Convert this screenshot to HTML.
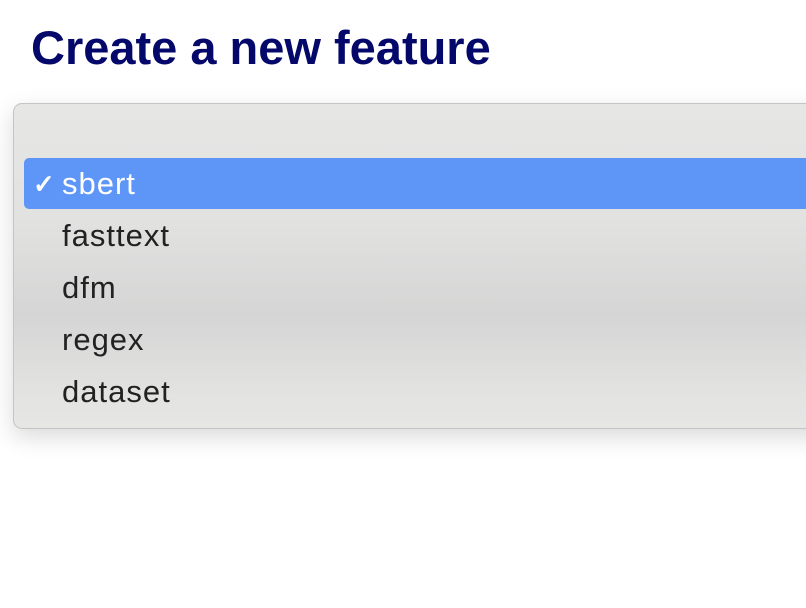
<!DOCTYPE html>
<html><head><style>
body{margin:0;width:806px;height:608px;background:#fff;overflow:hidden;position:relative;font-family:"Liberation Sans",sans-serif}
h1{position:absolute;left:31px;top:20px;margin:0;font-size:47px;font-weight:bold;color:#05086b;letter-spacing:0px}
.panel{position:absolute;left:13px;top:103px;width:820px;height:324px;border:1px solid #c4c4c4;border-radius:9px;
background:linear-gradient(#e6e6e5 0%,#e2e2e1 35%,#d5d5d5 65%,#e3e3e2 90%,#e6e6e5 100%);
box-shadow:0 8px 24px rgba(0,0,0,0.15)}
.hl{position:absolute;left:24px;top:158px;width:800px;height:51px;background:#5d96f6;border-radius:5px}
.it{position:absolute;left:62px;font-size:31px;letter-spacing:1px;color:#222;line-height:52px}
.ck{position:absolute;left:33px;top:158px;line-height:53px;font-size:26px;font-weight:bold;color:#fff}
</style></head><body>
<h1>Create a new feature</h1>
<div class="panel"></div>
<div class="hl"></div>
<div class="ck">✓</div>
<div class="it" style="top:158px;color:#fff">sbert</div>
<div class="it" style="top:210px">fasttext</div>
<div class="it" style="top:262px">dfm</div>
<div class="it" style="top:314px">regex</div>
<div class="it" style="top:366px">dataset</div>
</body></html>
